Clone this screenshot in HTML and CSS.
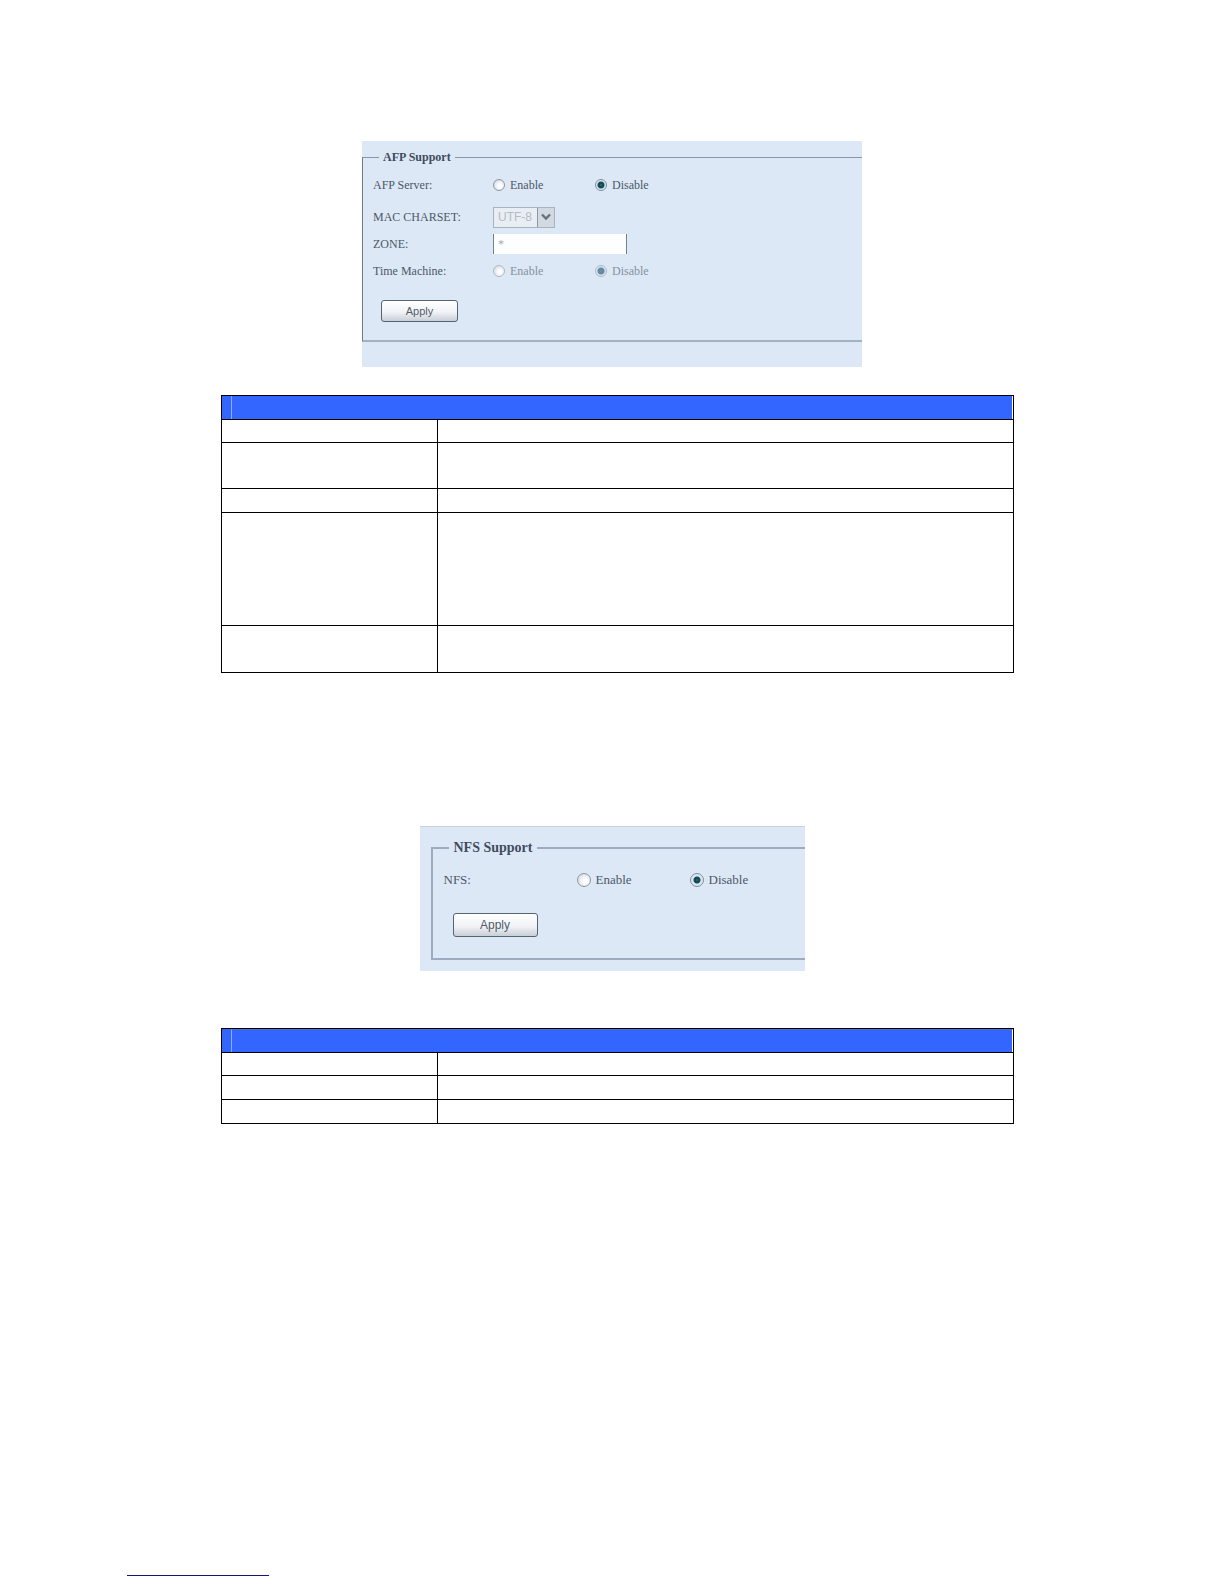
FILE: index.html
```html
<!DOCTYPE html>
<html lang="en">
<head>
<meta charset="utf-8">
<meta name="viewport" content="width=device-width, initial-scale=1">
<title>AFP and NFS Support</title>
<link rel="stylesheet" href="styles.css">
</head>
<body>
<main class="page">
  <form class="panel panel-afp">
    <fieldset class="group">
      <legend>AFP Support</legend>
      <div class="row" role="radiogroup" aria-labelledby="afp-label">
        <span id="afp-label">AFP Server:</span>
        <label class="choice"><input type="radio" name="afp">Enable</label>
        <label class="choice"><input type="radio" name="afp" checked>Disable</label>
      </div>
      <div class="row">
        <label for="charset">MAC CHARSET:</label>
        <span class="select-box">
          <select id="charset" disabled><option>UTF-8</option></select>
          <span class="arrow"><svg width="10" height="8" viewBox="0 0 10 8" aria-hidden="true"><path d="M1 1.5 5 5.5 9 1.5" fill="none" stroke="#65717d" stroke-width="2.4"/></svg></span>
        </span>
      </div>
      <div class="row row-short">
        <label for="zone">ZONE:</label>
        <input class="text-box" id="zone" type="text" value="*" disabled>
      </div>
      <div class="row" role="radiogroup" aria-labelledby="tm-label">
        <span id="tm-label">Time Machine:</span>
        <label class="choice choice-off"><input type="radio" name="tm" disabled>Enable</label>
        <label class="choice choice-off"><input type="radio" name="tm" checked disabled>Disable</label>
      </div>
      <button class="apply" type="button">Apply</button>
    </fieldset>
  </form>

  <table class="info info-afp">
    <colgroup><col class="col-item"><col></colgroup>
    <thead><tr><th colspan="2"><div class="bar"></div></th></tr></thead>
    <tbody>
      <tr><td></td><td></td></tr>
      <tr class="lines-2"><td></td><td></td></tr>
      <tr class="tall"><td></td><td></td></tr>
      <tr class="lines-5"><td></td><td></td></tr>
      <tr class="lines-2 tall"><td></td><td></td></tr>
    </tbody>
  </table>

  <form class="panel panel-nfs">
    <fieldset class="group">
      <legend>NFS Support</legend>
      <div class="row" role="radiogroup" aria-labelledby="nfs-label">
        <span id="nfs-label">NFS:</span>
        <label class="choice"><input type="radio" name="nfs">Enable</label>
        <label class="choice"><input type="radio" name="nfs" checked>Disable</label>
      </div>
      <button class="apply" type="button">Apply</button>
    </fieldset>
  </form>

  <table class="info info-nfs">
    <colgroup><col class="col-item"><col></colgroup>
    <thead><tr><th colspan="2"><div class="bar"></div></th></tr></thead>
    <tbody>
      <tr><td></td><td></td></tr>
      <tr class="tall"><td></td><td></td></tr>
      <tr class="tall"><td></td><td></td></tr>
    </tbody>
  </table>
</main>
<footer class="footer"><hr class="rule"></footer>
</body>
</html>
```
FILE: styles.css
```css
* { box-sizing: border-box; }

body {
  margin: 0;
  min-height: 100vh;
  display: flex;
  flex-direction: column;
  background: #fff;
  font-family: "Liberation Serif", "Times New Roman", serif;
}

.page { flex: 1; padding-top: 141px; }

.panel {
  max-width: 100%;
  margin: 0 auto;
  background: #dde8f6;
  color: #4b5868;
}

.panel-afp {
  --label: 120px;
  --choice: 102px;
  --dot: 12px;
  width: 500px;
  padding: 8px 0 25px;
  font-size: 12px;
}

.panel-nfs {
  --label: 133px;
  --choice: 113px;
  --dot: 14px;
  width: 385px;
  margin-top: 153px;
  padding: 13px 0 11px 11px;
  border-top: 1px solid #ccd2da;
  font-size: 13px;
}

.group {
  min-width: 0;
  margin: 0;
  border: 1px solid #8695aa;
  border-right: 0;
}

.panel-afp .group {
  padding: 4px 0 18px 10px;
  border-left-color: #667f8c;
  border-bottom: 2px solid #a3b1c4;
}

.panel-nfs .group {
  padding: 8px 0 21px 11px;
  border-width: 2px 0 2px 2px;
  border-color: #9dabc0;
}

legend {
  margin-left: 6px;
  padding: 0 4px;
  line-height: 16px;
  font-weight: bold;
  color: #3f4c5e;
}

.panel-nfs legend { margin-left: 5px; padding: 0 5px; font-size: 14px; }

.row {
  display: grid;
  grid-template-columns: var(--label) var(--choice) 1fr;
  align-items: center;
  height: 32px;
}

.row-short { height: 22px; }

.choice { display: flex; align-items: center; gap: 5px; }
.choice-off { color: #8591a0; }

input[type="radio"] {
  appearance: none;
  width: var(--dot);
  height: var(--dot);
  margin: 0;
  border: 1px solid #8c97a3;
  border-radius: 50%;
  background: radial-gradient(circle at 60% 60%, #fff 20%, #d5dce5 80%);
}

input[type="radio"]:checked {
  border-color: #7890a0;
  background: radial-gradient(circle, #5f9a9c 0, #164a58 1px, #164a58 3px, #dce7ef 4px);
}

input[type="radio"]:disabled { border-color: #aeb9c6; }

input[type="radio"]:checked:disabled {
  background: radial-gradient(circle, #7ea3bd 0, #6688a4 1px, #6688a4 3px, #d5e4f0 4px);
}

.select-box {
  display: flex;
  width: 62px;
  height: 21px;
  border: 1px solid #a9b3bf;
  background: #e9eef4;
}

select {
  appearance: none;
  width: 43px;
  padding: 0 0 0 4px;
  border: 0;
  background: transparent;
  color: #b5bbc3;
  font: 12px "Liberation Sans", Arial, sans-serif;
  opacity: 1;
}

.arrow {
  display: grid;
  flex: 1;
  place-items: center;
  border-left: 1px solid #8d98a5;
  background: #d3d9e0;
}

.text-box {
  grid-column: 2 / -1;
  width: 134px;
  height: 20px;
  padding: 0 4px;
  border: solid #76838e;
  border-width: 0 1px;
  background: #fdfefe;
  color: #a4aaa6;
  font: 12px "Liberation Serif", "Times New Roman", serif;
}

.apply {
  display: block;
  width: 77px;
  height: 22px;
  margin: 13px 0 0 8px;
  padding: 0;
  border: 1px solid #536475;
  border-radius: 3px;
  background: linear-gradient(#fff, #f1f3f6 55%, #c9cfd7);
  color: #525c68;
  font: 11px "Liberation Sans", Arial, sans-serif;
}

.panel-nfs .apply {
  width: 85px;
  height: 24px;
  margin: 17px 0 0 9px;
  font-size: 12px;
}

.info {
  width: calc(100% - 431px);
  margin-left: 221px;
  border-collapse: collapse;
  table-layout: fixed;
}

.info-afp { margin-top: 28px; }
.info-nfs { margin-top: 57px; }

.col-item { width: 216px; }

.info th,
.info td { padding: 0; border: 1px solid #000; }

.info th { height: 24px; background: #36f; }
.info td { height: 23px; }
.info .tall td { height: 24px; }
.info .lines-2 td { height: 46px; }
.info .lines-2.tall td { height: 47px; }
.info .lines-5 td { height: 113px; }

.bar {
  height: 23px;
  margin-left: 9px;
  border-left: 1px solid #8aabff;
  border-right: 1px solid #fff;
}

.info-nfs .bar { border-top: 1px solid #4f6dc4; }

.footer { padding: 0 127px 8px; }

.rule {
  width: 142px;
  height: 1px;
  margin: 0;
  border: 0;
  background: #15157a;
}
```
